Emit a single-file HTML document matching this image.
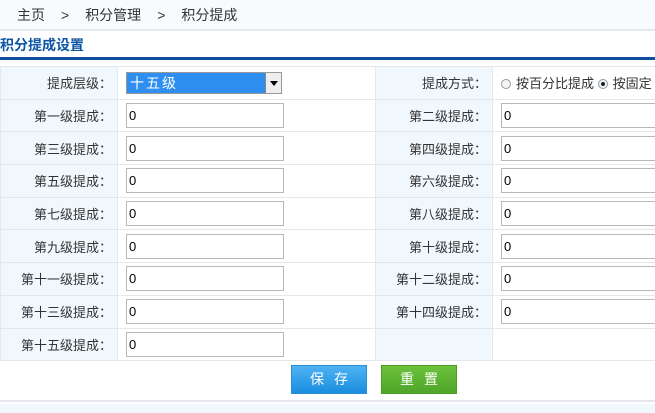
<!DOCTYPE html>
<html><head><meta charset="utf-8"><style>
*{margin:0;padding:0;box-sizing:border-box}
body{width:655px;height:413px;overflow:hidden;background:#fff;font-family:"Liberation Sans","Noto Sans CJK SC",sans-serif;font-size:13px;color:#333}
.bc{position:absolute;top:0;left:0;width:655px;height:31px;background:#f8fbfd;border-bottom:2px solid #e4e8ec;font-size:14px;line-height:30px;padding-left:17px;color:#333}
.bc span{margin:0 16px}
.tt{position:absolute;top:33px;left:0;width:655px;height:27px;border-bottom:3px solid #0d4f9e;color:#0d56a6;font-weight:bold;font-size:14px;line-height:24px}
table{position:absolute;top:66px;left:0;border-collapse:collapse;width:680px}
td{border:1px solid #e3e8ec;height:32.7px;vertical-align:middle}
td.l{background:#f1f8fd;text-align:right;padding-right:5px;width:117px}
td.v{width:258px;padding-left:8px}
td.l2{width:115px}
input.t{width:158px;height:25px;border:1px solid #b8b8b8;font:13px "Liberation Sans",sans-serif;padding-left:2px;color:#000;display:block}
.sel{width:156px;height:22px;border:1px solid #999;background:#2f8ff0;color:#fff;position:relative;line-height:20px;padding-left:3px;font-size:14px;letter-spacing:2px}
.sel i{position:absolute;right:0;top:0;width:16px;height:20px;background:#eee;border-left:1px solid #888;}
.sel i:after{content:"";position:absolute;left:4px;top:8px;border:4px solid transparent;border-top:5px solid #000}
.rd{display:inline-block;width:10px;height:10px;border:1px solid #999;border-radius:50%;vertical-align:-1px;margin-right:5px;background:#f4f4f4;position:relative}
.rd.on:after{content:"";position:absolute;left:2px;top:2px;width:4px;height:4px;border-radius:50%;background:#123}
.btns{position:absolute;top:365px;left:0;width:655px;height:37px;border-bottom:2px solid #e4e8ec}
.b{position:absolute;top:0;width:76px;height:29px;color:#fff;text-align:center;line-height:27px;font-size:14px;letter-spacing:10px;padding-left:10px}
.bottom{position:absolute;top:404px;left:0;width:655px;height:9px;background:#f1f8fd}
</style></head><body>
<div class="bc">主页<span>&gt;</span>积分管理<span>&gt;</span>积分提成</div>
<div class="tt">积分提成设置</div>
<table>
<tr><td class="l">提成层级：</td><td class="v"><div class="sel">十五级<i></i></div></td><td class="l l2">提成方式：</td><td style="padding-left:8px;white-space:nowrap"><span class="rd"></span>按百分比提成 <span class="rd on"></span>按固定</td></tr>
<tr><td class="l">第一级提成：</td><td class="v"><input class="t" value="0"></td><td class="l">第二级提成：</td><td style="padding-left:8px"><input class="t" value="0"></td></tr>
<tr><td class="l">第三级提成：</td><td class="v"><input class="t" value="0"></td><td class="l">第四级提成：</td><td style="padding-left:8px"><input class="t" value="0"></td></tr>
<tr><td class="l">第五级提成：</td><td class="v"><input class="t" value="0"></td><td class="l">第六级提成：</td><td style="padding-left:8px"><input class="t" value="0"></td></tr>
<tr><td class="l">第七级提成：</td><td class="v"><input class="t" value="0"></td><td class="l">第八级提成：</td><td style="padding-left:8px"><input class="t" value="0"></td></tr>
<tr><td class="l">第九级提成：</td><td class="v"><input class="t" value="0"></td><td class="l">第十级提成：</td><td style="padding-left:8px"><input class="t" value="0"></td></tr>
<tr><td class="l">第十一级提成：</td><td class="v"><input class="t" value="0"></td><td class="l">第十二级提成：</td><td style="padding-left:8px"><input class="t" value="0"></td></tr>
<tr><td class="l">第十三级提成：</td><td class="v"><input class="t" value="0"></td><td class="l">第十四级提成：</td><td style="padding-left:8px"><input class="t" value="0"></td></tr>
<tr><td class="l">第十五级提成：</td><td class="v"><input class="t" value="0"></td><td class="l"></td><td></td></tr>
</table>
<div class="btns"><div class="b" style="left:291px;background:linear-gradient(#4fb2f2,#1a8ee0);border:1px solid #2b8fd8">保存</div><div class="b" style="left:381px;background:linear-gradient(#6cc23a,#4ea52a);border:1px solid #4a9a25">重置</div></div>
<div class="bottom"></div>
</body></html>
